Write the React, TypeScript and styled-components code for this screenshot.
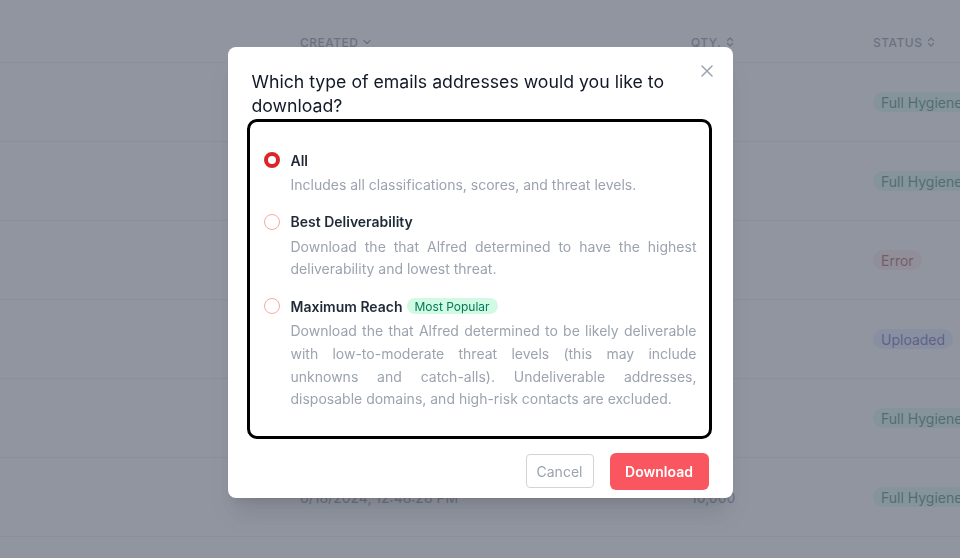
import styled, { createGlobalStyle } from "styled-components"
import { useState } from "react"
import { ChevronDown, ChevronsUpDown } from "lucide-react"

type Tone = "green" | "red" | "indigo"

// rows behind the dialog: only the last one peeks out below it
const rows: { created: string; qty: string; status: string; tone: Tone }[] = [
  { created: "", qty: "", status: "Full Hygiene", tone: "green" },
  { created: "", qty: "", status: "Full Hygiene", tone: "green" },
  { created: "", qty: "", status: "Error", tone: "red" },
  { created: "", qty: "", status: "Uploaded", tone: "indigo" },
  { created: "", qty: "", status: "Full Hygiene", tone: "green" },
  { created: "6/18/2024, 12:48:28 PM", qty: "10,000", status: "Full Hygiene", tone: "green" },
]

const options = [
  {
    id: "all",
    label: "All",
    popular: false,
    text: "Includes all classifications, scores, and threat levels.",
  },
  {
    id: "best",
    label: "Best Deliverability",
    popular: false,
    text: "Download the that Alfred determined to have the highest deliverability and lowest threat.",
  },
  {
    id: "reach",
    label: "Maximum Reach",
    popular: true,
    text: "Download the that Alfred determined to be likely deliverable with low-to-moderate threat levels (this may include unknowns and catch-alls). Undeliverable addresses, disposable domains, and high-risk contacts are excluded.",
  },
]

const App = () => {
  const [selected, setSelected] = useState<string>("all")

  return (
    <>
      <GlobalStyle />
      <Table>
        <HeadRow>
          <span />
          <HeadCell>Created <ChevronDown size={12} strokeWidth={2.5} /></HeadCell>
          <HeadCell>Qty. <ChevronsUpDown size={12} strokeWidth={2.5} /></HeadCell>
          <HeadCell>Status <ChevronsUpDown size={12} strokeWidth={2.5} /></HeadCell>
        </HeadRow>
        {rows.map((r, i) => (
          <Row key={i}>
            <span />
            <Cell>{r.created}</Cell>
            <Cell>{r.qty}</Cell>
            <Cell>
              <Status tone={r.tone}>{r.status}</Status>
            </Cell>
          </Row>
        ))}
      </Table>

      <Overlay>
        <Dialog>
          <Header>
            <Title>Which type of emails addresses would you like to download?</Title>
            <Close aria-label="Close">
              <svg width="12" height="12" viewBox="0 0 12 12">
                <path d="M1 1L11 11M11 1L1 11" stroke="#9ca3af" strokeWidth="1.5" strokeLinecap="round" />
              </svg>
            </Close>
          </Header>

          <OptionBox>
            {options.map((o) => (
              <Option key={o.id} onClick={() => setSelected(o.id)}>
                <Radio checked={selected === o.id} />
                <OptionBody>
                  <LabelRow>
                    <OptionLabel>{o.label}</OptionLabel>
                    {o.popular && <Badge>Most Popular</Badge>}
                  </LabelRow>
                  <Description>{o.text}</Description>
                </OptionBody>
              </Option>
            ))}
          </OptionBox>

          <Footer>
            <CancelButton>Cancel</CancelButton>
            <DownloadButton>Download</DownloadButton>
          </Footer>
        </Dialog>
      </Overlay>
    </>
  )
}
export default App

const GlobalStyle = createGlobalStyle`
  * { box-sizing: border-box; }
  body {
    margin: 0;
    background: #ffffff;
    font-family: Inter, "Noto Sans", sans-serif;
  }
`

const Table = styled.div`
  width: 960px;
  height: 558px;
  overflow: hidden;
`

const HeadRow = styled.div`
  display: grid;
  grid-template-columns: 300px 391px 182px 1fr;
  height: 63px;
  padding-top: 34px;
  border-bottom: 1px solid #e5e7eb;
`

const HeadCell = styled.div`
  display: flex;
  align-items: center;
  gap: 3px;
  height: 16px;
  font-size: 12px;
  font-weight: 500;
  letter-spacing: 0.04em;
  text-transform: uppercase;
  color: #6b7280;
`

const Row = styled.div`
  display: grid;
  grid-template-columns: 300px 391px 182px 1fr;
  align-items: center;
  height: 79px;
  border-bottom: 1px solid #e5e7eb;
`

const Cell = styled.div`
  font-size: 14px;
  color: #6b7280;
  white-space: nowrap;
  overflow: hidden;
`

const toneColors: Record<Tone, [string, string]> = {
  green: ["#d1fae5", "#065f46"],
  red: ["#fee2e2", "#991b1b"],
  indigo: ["#e0e7ff", "#3730a3"],
}

const Status = styled.span<{ tone: Tone }>`
  display: inline-flex;
  align-items: center;
  height: 20px;
  padding: 0 8px;
  border-radius: 999px;
  font-size: 14px;
  background: ${(p) => toneColors[p.tone][0]};
  color: ${(p) => toneColors[p.tone][1]};
`

const Overlay = styled.div`
  position: fixed;
  inset: 0;
  background: rgba(107, 114, 128, 0.75);
  display: flex;
  justify-content: center;
  align-items: flex-start;
  padding-top: 47px;
`

const Dialog = styled.div`
  width: 505px;
  height: 451px;
  background: #ffffff;
  border-radius: 8px;
  padding: 23px 24px 8px;
  box-shadow: 0 20px 25px -5px rgba(0, 0, 0, 0.1), 0 8px 10px -6px rgba(0, 0, 0, 0.1);
  display: flex;
  flex-direction: column;
`

const Header = styled.div`
  display: flex;
  justify-content: space-between;
  align-items: flex-start;
  gap: 16px;
`

const Title = styled.h3`
  margin: 0;
  font-size: 17.7px;
  font-weight: 400;
  line-height: 24px;
  color: #111827;
  max-width: 420px;
`

const Close = styled.button`
  border: none;
  background: none;
  padding: 0;
  margin-top: -5px;
  margin-right: -4px;
  width: 12px;
  height: 12px;
  display: flex;
  cursor: pointer;
`

const OptionBox = styled.div`
  flex: none;
  margin: 1px -3px 0 -5px;
  border: 3px solid #000000;
  border-radius: 10px;
  padding: 28px 12px 25px 14px;
  display: flex;
  flex-direction: column;
  gap: 15px;
`

const Option = styled.div`
  display: flex;
  gap: 11px;
  cursor: pointer;
`

const Radio = styled.span<{ checked: boolean }>`
  flex: none;
  width: 16px;
  height: 16px;
  margin-top: 2px;
  border-radius: 50%;
  background: #ffffff;
  border: ${(p) => (p.checked ? "4.5px solid #dc2626" : "1.5px solid #fca5a5")};
`

const OptionBody = styled.div`
  flex: 1;
  display: flex;
  flex-direction: column;
  gap: 4px;
`

const LabelRow = styled.div`
  display: flex;
  align-items: center;
  gap: 4px;
  height: 20px;
`

const OptionLabel = styled.span`
  font-size: 14px;
  font-weight: 600;
  color: #1f2937;
`

const Badge = styled.span`
  display: inline-flex;
  align-items: center;
  height: 16px;
  padding: 0 8px;
  border-radius: 999px;
  background: #d1fae5;
  color: #047857;
  font-size: 12px;
`

const Description = styled.p`
  margin: 0;
  font-size: 14px;
  line-height: 22.7px;
  color: #9ca3af;
  text-align: justify;
`

const Footer = styled.div`
  flex: none;
  display: flex;
  justify-content: flex-end;
  align-items: center;
  gap: 16px;
  margin-top: 14px;
`

const CancelButton = styled.button`
  height: 34px;
  width: 68px;
  padding: 0;
  border: 1px solid #d1d5db;
  border-radius: 4px;
  background: #ffffff;
  color: #9ca3af;
  font-family: inherit;
  font-size: 14px;
`

const DownloadButton = styled.button`
  height: 37px;
  width: 99px;
  padding: 0;
  border: none;
  border-radius: 6px;
  background: #f9565f;
  color: #ffffff;
  font-family: inherit;
  font-size: 14px;
  font-weight: 600;
`
